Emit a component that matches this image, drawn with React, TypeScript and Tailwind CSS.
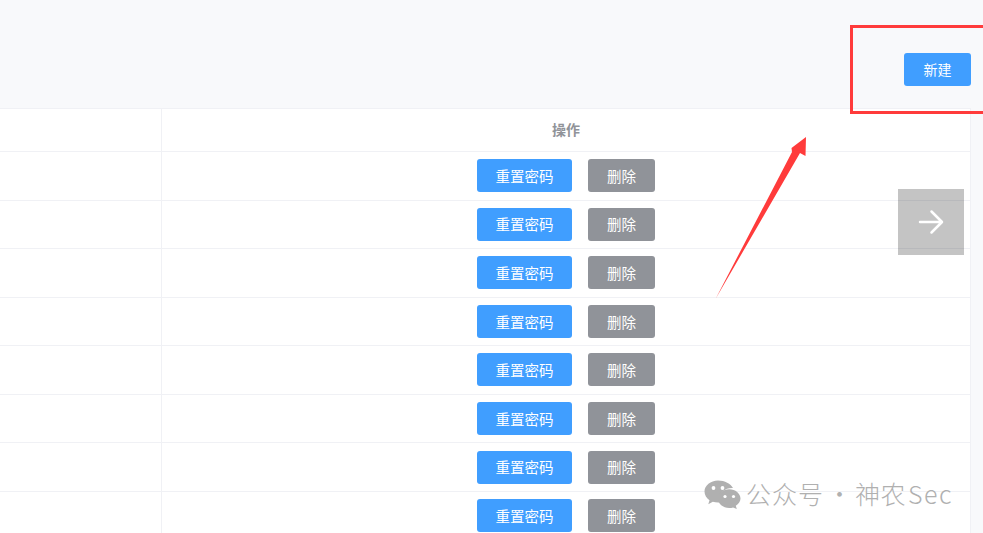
import React from 'react';

const rows = [0, 1, 2, 3, 4, 5, 6, 7];

function WeChatIcon() {
  return (
    <svg width="37" height="29" viewBox="0 0 37 29" className="shrink-0">
      <path d="M14 0.5C6.6 0.5 0.5 5.5 0.5 11.6c0 3.5 2 6.6 5 8.7l-1.2 4 4.5-2.5c1.6.5 3.4.8 5.2.8.5 0 1 0 1.4-.1-.3-1.1-.5-2.2-.5-3.3 0-6.3 6-11.2 13.2-11.2h.9C26.7 3.7 20.9.5 14 .5z" fill="#b0b0b0" />
      <path d="M36.5 18.6c0-5.2-5.1-9.4-11.300-9.400s-11.300 4.200-11.300 9.400 5.100 9.400 11.300 9.400c1.400 0 2.700-.2 3.900-.6l3.700 1.600-1-3.300c2.800-1.700 4.700-4.400 4.700-7.100z" fill="#b0b0b0" />
      <circle cx="9.500" cy="8" r="1.900" fill="#fff" />
      <circle cx="18.500" cy="8" r="1.900" fill="#fff" />
      <circle cx="21" cy="16.500" r="1.600" fill="#fff" />
      <circle cx="29.500" cy="16.500" r="1.600" fill="#fff" />
    </svg>
  );
}

export default function App() {
  return (
    <div className="relative flex h-[533px] w-[983px] flex-col overflow-hidden bg-[#f8f9fb] font-['Noto_Sans_CJK_SC','Liberation_Sans',sans-serif]">
      <div className="flex h-[108px] shrink-0 items-start justify-end pr-3 pt-[53px]">
        <button className="h-[33px] w-[67px] rounded-[3px] bg-[#409eff] text-[14px] text-white">新建</button>
      </div>

      <div className="w-[971px] flex-1 border-r border-t border-[#f0f1f5] bg-white">
        <div className="flex h-[43px] border-b border-[#f0f1f5]">
          <div className="w-[162px] shrink-0 border-r border-[#f0f1f5]" />
          <div className="flex flex-1 items-center justify-center pb-[2px] text-[14px] font-bold text-[#909399]">操作</div>
        </div>
        {rows.map((row) => (
          <div key={row} className="flex h-[48.550px] border-b border-[#f0f1f5]">
            <div className="w-[162px] shrink-0 border-r border-[#f0f1f5]" />
            <div className="flex flex-1 items-center justify-center gap-4">
              <button className="h-[33px] w-[95px] rounded-[3px] bg-[#409eff] text-[14.500px] text-white">重置密码</button>
              <button className="h-[33px] w-[67px] rounded-[3px] bg-[#909399] text-[14.500px] text-white">删除</button>
            </div>
          </div>
        ))}
      </div>

      {/* annotation layer */}
      <div className="absolute left-[850px] top-[25px] h-[89px] w-[133px] border-[3px] border-r-0 border-[#ff3b3b]" />
      <svg className="absolute left-[710px] top-[130px]" width="105" height="175" viewBox="0 0 105 175">
        <path d="M5.500 169 L82 22 L81.500 18 L96 7 L95.500 26 L90 23 Z" fill="#ff3b3b" />
      </svg>
      <div className="absolute left-[898px] top-[189px] flex h-[66px] w-[66px] items-center justify-center bg-[rgba(0,0,0,0.23)]">
        <svg width="26" height="26" viewBox="0 0 26 26" fill="none" stroke="#fff" strokeWidth="2.500" strokeLinecap="round" strokeLinejoin="round">
          <path d="M2 13h21M13.500 2.500 24 13 13.500 23.500" />
        </svg>
      </div>
      <div className="absolute left-[704px] top-[480px] flex items-center text-[25px] leading-[29px] font-light text-[#b0b0b0]">
        <WeChatIcon />
        <span className="ml-[5px] -mt-[2px] whitespace-nowrap tracking-[1px]">公众号</span>
        <span className="mx-[3px] -mt-[2px]">·</span>
        <span className="-mt-[2px] whitespace-nowrap tracking-[0.500px]">神农</span>
        <span className="-mt-[2px] ml-[2px] whitespace-nowrap tracking-[1.500px]">Sec</span>
      </div>
    </div>
  );
}
